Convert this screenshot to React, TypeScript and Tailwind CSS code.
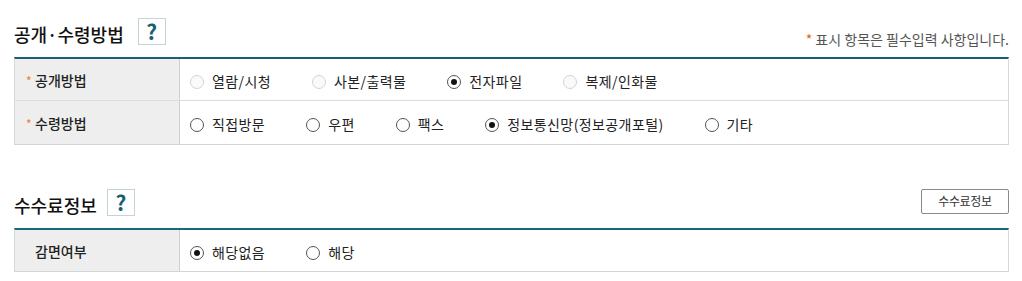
import React from "react";

type Opt = { label: string; checked?: boolean; disabled?: boolean };

function Radio({ label, checked, disabled }: Opt) {
  return (
    <label className="flex items-center mr-[41px] shrink-0">
      <span
        className={`w-[14px] h-[14px] rounded-full border flex items-center justify-center ${
          disabled ? "border-[#d4d4d4] bg-[#fafafa]" : "border-[#555] bg-white"
        }`}
      >
        {checked && <span className="w-[6px] h-[6px] rounded-full bg-[#111]" />}
      </span>
      <span className="ml-[8px] text-[14px] tracking-[0.4px] text-[#222]">{label}</span>
    </label>
  );
}

function Help() {
  return (
    <span className="w-[28px] h-[27px] border border-[#c4d3da] flex items-center justify-center text-[21px] font-bold text-[#16606f] leading-none">
      ?
    </span>
  );
}

function Row({ label, req, opts, h, last }: { label: string; req?: boolean; opts: Opt[]; h: string; last?: boolean }) {
  return (
    <div className={`flex ${h} ${last ? "" : "border-b border-[#dcdcdc]"}`}>
      <div className="w-[165px] shrink-0 bg-[#eeeeee] border-r border-[#cfcfcf] flex items-center pl-[11px] pt-[2px]">
        <span className={`w-[9px] text-[12px] text-[#f07a2a] ${req ? "" : "invisible"}`}>*</span>
        <span className="text-[14px] font-medium text-[#222]">{label}</span>
      </div>
      <div className="flex items-center pl-[10px] pt-[4px]">
        {opts.map((o) => (
          <Radio key={o.label} {...o} />
        ))}
      </div>
    </div>
  );
}

export default function App() {
  return (
    <div
      className="w-[1022px] h-[281px] bg-white px-[13px] pl-[14px] pt-[17px]"
      style={{ fontFamily: '"Noto Sans CJK KR", "Noto Sans", sans-serif' }}
    >
      <div className="flex items-center justify-between h-[28px]">
        <div className="flex items-center">
          <h2 className="text-[18px] font-medium text-[#111] mr-[14px] pt-[6px]">공개·수령방법</h2>
          <Help />
        </div>
        <p className="text-[14px] text-[#555] pt-[16px]">
          <span className="text-[#e0660c]">*</span> 표시 항목은 필수입력 사항입니다.
        </p>
      </div>
      <div className="mt-[12px] border-t-2 border-t-[#1b5e72] border-x border-x-[#d9d9d9] border-b border-b-[#d4d4d4]">
        <Row
          label="공개방법"
          req
          h="h-[42px]"
          opts={[
            { label: "열람/시청", disabled: true },
            { label: "사본/출력물", disabled: true },
            { label: "전자파일", checked: true },
            { label: "복제/인화물", disabled: true },
          ]}
        />
        <Row
          label="수령방법"
          req
          h="h-[43px]"
          last
          opts={[
            { label: "직접방문" },
            { label: "우편" },
            { label: "팩스" },
            { label: "정보통신망(정보공개포털)", checked: true },
            { label: "기타" },
          ]}
        />
      </div>

      <div className="flex items-center justify-between h-[28px] mt-[43px]">
        <div className="flex items-center">
          <h2 className="text-[18px] font-medium text-[#111] mr-[10px] pt-[6px]">수수료정보</h2>
          <Help />
        </div>
        <button className="w-[88px] h-[25px] border border-[#8a8a8a] rounded-[2px] text-[12px] tracking-[-0.3px] text-[#333] bg-white mb-[2px]">
          수수료정보
        </button>
      </div>
      <div className="mt-[12px] border-t-2 border-t-[#17687a] border-x border-x-[#d9d9d9] border-b border-b-[#d4d4d4]">
        <Row
          label="감면여부"
          h="h-[41px]"
          last
          opts={[{ label: "해당없음", checked: true }, { label: "해당" }]}
        />
      </div>
    </div>
  );
}
